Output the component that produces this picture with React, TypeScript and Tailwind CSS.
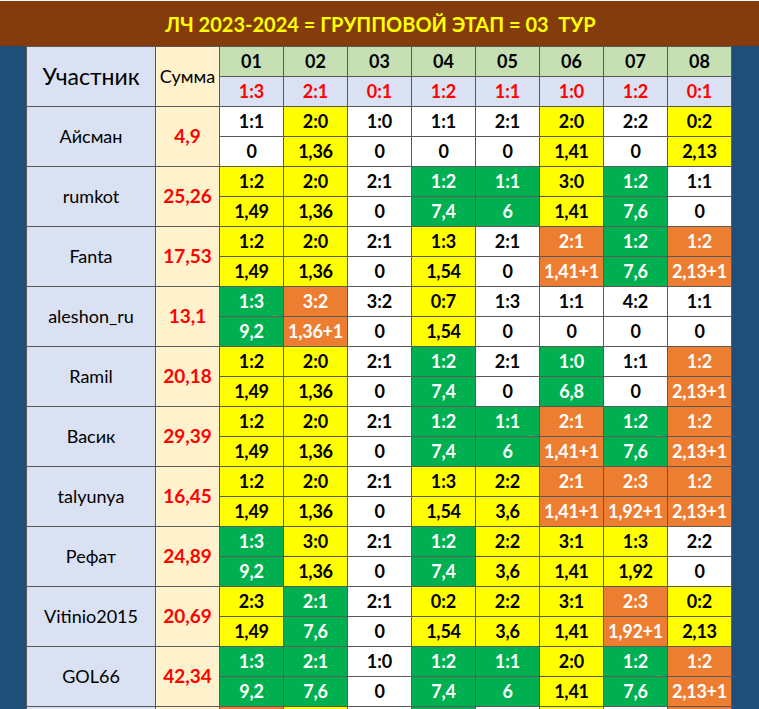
import React from "react";

type Row = { name: string; sum: string; s: string; p: string; c: string };

const rows: Row[] = [
  { name: "Айсман", sum: "4,9", s: "1:1 2:0 1:0 1:1 2:1 2:0 2:2 0:2", p: "0 1,36 0 0 0 1,41 0 2,13", c: "WYWWWYWY" },
  { name: "rumkot", sum: "25,26", s: "1:2 2:0 2:1 1:2 1:1 3:0 1:2 1:1", p: "1,49 1,36 0 7,4 6 1,41 7,6 0", c: "YYWGGYGW" },
  { name: "Fanta", sum: "17,53", s: "1:2 2:0 2:1 1:3 2:1 2:1 1:2 1:2", p: "1,49 1,36 0 1,54 0 1,41+1 7,6 2,13+1", c: "YYWYWOGO" },
  { name: "aleshon_ru", sum: "13,1", s: "1:3 3:2 3:2 0:7 1:3 1:1 4:2 1:1", p: "9,2 1,36+1 0 1,54 0 0 0 0", c: "GOWYWWWW" },
  { name: "Ramil", sum: "20,18", s: "1:2 2:0 2:1 1:2 2:1 1:0 1:1 1:2", p: "1,49 1,36 0 7,4 0 6,8 0 2,13+1", c: "YYWGWGWO" },
  { name: "Васик", sum: "29,39", s: "1:2 2:0 2:1 1:2 1:1 2:1 1:2 1:2", p: "1,49 1,36 0 7,4 6 1,41+1 7,6 2,13+1", c: "YYWGGOGO" },
  { name: "talyunya", sum: "16,45", s: "1:2 2:0 2:1 1:3 2:2 2:1 2:3 1:2", p: "1,49 1,36 0 1,54 3,6 1,41+1 1,92+1 2,13+1", c: "YYWYYOOO" },
  { name: "Рефат", sum: "24,89", s: "1:3 3:0 2:1 1:2 2:2 3:1 1:3 2:2", p: "9,2 1,36 0 7,4 3,6 1,41 1,92 0", c: "GYWGYYYW" },
  { name: "Vitinio2015", sum: "20,69", s: "2:3 2:1 2:1 0:2 2:2 3:1 2:3 0:2", p: "1,49 7,6 0 1,54 3,6 1,41 1,92+1 2,13", c: "YGWYYYOY" },
  { name: "GOL66", sum: "42,34", s: "1:3 2:1 1:0 1:2 1:1 2:0 1:2 1:2", p: "9,2 7,6 0 7,4 6 1,41 7,6 2,13+1", c: "GGWGGYGO" },
  { name: "", sum: "", s: "- - - - - - - -", p: "- - - - - - - -", c: "OYWGWYWO" },
];

const cls: Record<string, string> = {
  W: "bg-white text-black",
  Y: "bg-[#FFFF00] text-black",
  G: "bg-[#00B050] text-white",
  O: "bg-[#ED7D31] text-white",
};

const cols = ["01", "02", "03", "04", "05", "06", "07", "08"];
const res = ["1:3", "2:1", "0:1", "1:2", "1:1", "1:0", "1:2", "0:1"];

export default function App() {
  return (
    <div
      className="w-[759px] h-[709px] overflow-hidden bg-[#1F4E79]"
      style={{ fontFamily: "Lato, 'Noto Sans', sans-serif" }}
    >
      <div className="h-px bg-white" />
      <div className="h-[45px] bg-[#843C0C] flex items-center justify-center">
        <span className="text-[#FFFF00] font-bold text-[20px] whitespace-pre leading-none pl-[2px]">
          ЛЧ 2023-2024 = ГРУППОВОЙ ЭТАП = 03  ТУР
        </span>
      </div>
      <div className="pl-[26px]">
        <div className="grid w-max grid-cols-[128px_63px_repeat(8,63px)] auto-rows-[29px] gap-px bg-[#595959] border border-[#595959]">
          <div className="row-span-2 bg-[#D9E1F2] flex items-center justify-center text-[23px] text-black">Участник</div>
          <div className="row-span-2 bg-[#FFF2CC] flex items-center justify-center text-[18px] text-black">Сумма</div>
          {cols.map((c) => (
            <div key={c} className="bg-[#C6E0B4] flex items-center justify-center font-bold text-[18px] text-black">
              {c}
            </div>
          ))}
          {res.map((r, i) => (
            <div key={i} className="bg-[#D9E1F2] flex items-center justify-center font-bold text-[18px] text-[#FF0000]">
              {r}
            </div>
          ))}
          {rows.map((row, ri) => {
            const s = row.s.split(" ");
            const p = row.p.split(" ");
            return (
              <React.Fragment key={ri}>
                <div className="row-span-2 bg-[#D9E1F2] flex items-center justify-center text-[18px] text-black">
                  {row.name}
                </div>
                <div className="row-span-2 bg-[#FFF2CC] flex items-center justify-center font-bold text-[19px] text-[#FF0000]">
                  {row.sum}
                </div>
                {s.map((v, i) => (
                  <div key={"s" + i} className={`${cls[row.c[i]]} flex items-center justify-center font-bold text-[18px]`}>
                    {v === "-" ? "" : v}
                  </div>
                ))}
                {p.map((v, i) => (
                  <div key={"p" + i} className={`${cls[row.c[i]]} flex items-center justify-center font-bold text-[18px] whitespace-nowrap tracking-[-0.2px]`}>
                    {v === "-" ? "" : v}
                  </div>
                ))}
              </React.Fragment>
            );
          })}
        </div>
      </div>
    </div>
  );
}
